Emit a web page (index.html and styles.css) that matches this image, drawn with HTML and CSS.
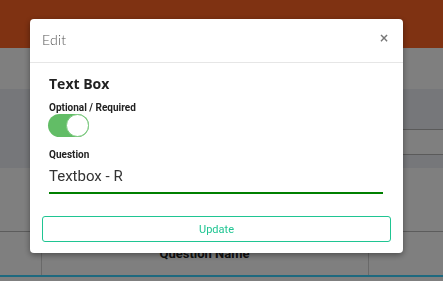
FILE: index.html
```html
<!DOCTYPE html>
<html lang="en">
<head>
    <meta charset="UTF-8">
    <meta name="viewport" content="width=device-width, initial-scale=1.0">
    <title>Edit Question</title>
    <link rel="stylesheet" href="styles.css">
</head>
<body>
    <div class="page">
        <div class="topbar"></div>
        <div class="navbar"></div>
        <div class="toolbar">
            <div class="tool-box"></div>
        </div>
        <div class="spacer"></div>
        <table class="grid">
            <tr>
                <th class="col-side"></th>
                <th>Question Name</th>
                <th class="col-side"></th>
            </tr>
        </table>
    </div>

    <div class="overlay">
        <div class="modal">
            <div class="modal-header">
                <span class="modal-title">Edit</span>
                <span class="close">&times;</span>
            </div>
            <div class="modal-body">
                <div class="field-title">Text Box</div>
                <label class="small-label">Optional / Required</label>
                <div class="switch on"><span class="knob"></span></div>
                <label class="small-label question-label" for="question">Question</label>
                <input type="text" id="question" class="question-input" value="Textbox - R">
            </div>
            <div class="modal-footer">
                <button class="update-btn">Update</button>
            </div>
        </div>
    </div>
</body>
</html>
```

FILE: styles.css
```css
body {
    margin: 0;
    font-family: 'Roboto', sans-serif;
    background-color: white;
    overflow: hidden;
}
.page {
    width: 443px;
    height: 281px;
}
.topbar {
    height: 48px;
    background-color: #fe6424;
}
.navbar {
    height: 41px;
    background-color: white;
}
.toolbar {
    height: 79px;
    background-color: #eceff4;
    display: flex;
    justify-content: flex-end;
    padding-top: 40px;
    box-sizing: border-box;
}
.tool-box {
    width: 150px;
    height: 24px;
    background-color: white;
    border-top: 1px solid #b4b4b4;
    border-bottom: 1px solid #b4b4b4;
}
.spacer {
    height: 63px;
}
.grid {
    width: 100%;
    border-collapse: collapse;
    border-top: 1px solid #b8b8b8;
    border-bottom: 2px solid #3ad2ff;
}
.grid th {
    height: 44px;
    padding: 0;
    font-size: 13px;
    font-weight: bold;
    color: #222;
    border-left: 1px solid #d2d2d2;
    border-right: 1px solid #d2d2d2;
    text-align: center;
    vertical-align: bottom;
    padding-bottom: 14px;
    box-sizing: border-box;
}
.grid .col-side {
    width: 41px;
    border-left: none;
}
.grid th:last-child {
    width: 75px;
    border-right: none;
}
.overlay {
    position: fixed;
    top: 0;
    left: 0;
    right: 0;
    bottom: 0;
    background-color: rgba(0,0,0,0.5);
}
.modal {
    width: 373px;
    margin: 19px 0 0 30px;
    background-color: white;
    border-radius: 4px;
    box-shadow: 0 2px 6px rgba(0,0,0,0.4);
}
.modal-header {
    height: 43px;
    border-bottom: 1px solid #e6e6e6;
    display: flex;
    align-items: center;
    justify-content: space-between;
    padding: 0 14px 0 12px;
}
.modal-title {
    font-family: 'Lato', sans-serif;
    font-weight: 300;
    font-size: 14px;
    color: #555;
    letter-spacing: 0.2px;
    margin-top: -3px;
}
.close {
    font-family: 'DejaVu Sans', sans-serif;
    font-size: 12px;
    font-weight: bold;
    color: #777;
    margin-top: -6px;
}
.modal-body {
    padding: 11px 20px 0 19px;
}
.field-title {
    font-family: 'Open Sans', sans-serif;
    font-weight: bold;
    font-size: 14px;
    line-height: 20px;
    color: #222;
    margin-bottom: 7px;
}
.small-label {
    display: block;
    font-size: 10px;
    font-weight: bold;
    line-height: 14px;
    color: #222;
}
.switch {
    width: 41px;
    height: 23px;
    margin: -1px 0 0 -1px;
    border-radius: 12px;
    background-color: #62bd66;
    display: flex;
    align-items: center;
    justify-content: flex-end;
}
.knob {
    width: 23px;
    height: 23px;
    border-radius: 50%;
    background-color: white;
    border: 1px solid #7cc97f;
    box-sizing: border-box;
}
.question-label {
    margin-top: 11px;
}
.question-input {
    display: block;
    width: 100%;
    margin-top: 3px;
    padding: 1px 0 6px 0;
    border: none;
    border-bottom: 2px solid #008000;
    font-family: 'Roboto', sans-serif;
    font-size: 15px;
    line-height: 20px;
    height: 29px;
    color: #333;
    outline: none;
    box-sizing: border-box;
}
.modal-footer {
    padding: 22px 12px 11px;
}
.update-btn {
    display: block;
    width: 100%;
    height: 26px;
    background-color: white;
    border: 1px solid #1fc592;
    border-radius: 3px;
    color: #1fc592;
    font-family: 'Roboto', sans-serif;
    font-size: 11px;
    cursor: pointer;
}
```
